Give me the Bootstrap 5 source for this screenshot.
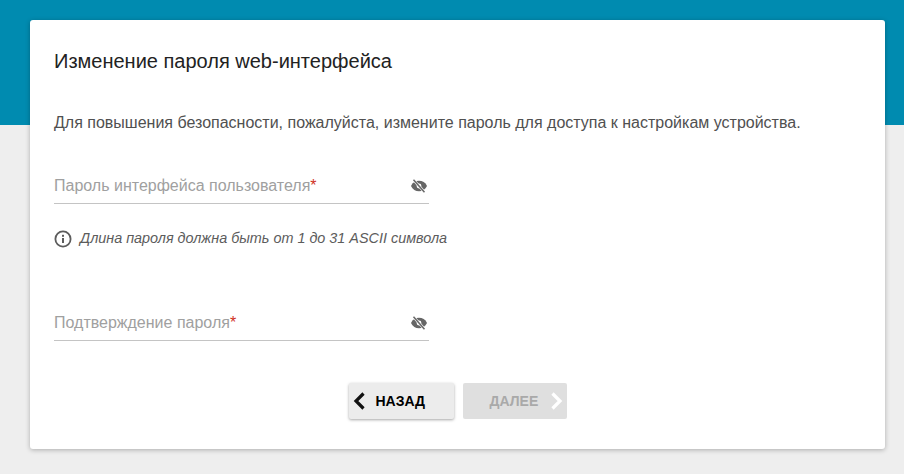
<!DOCTYPE html>
<html lang="ru">

<head>
    <meta charset="UTF-8">
    <meta name="viewport" content="width=device-width, initial-scale=1.0">
    <title>Изменение пароля web-интерфейса</title>
    <link href="https://cdn.jsdelivr.net/npm/bootstrap@5.3.0/dist/css/bootstrap.min.css" rel="stylesheet">
    <style>
        body {
            font-family: "Liberation Sans", Arial, sans-serif;
            background: linear-gradient(#008bb0 125px, #eeeeee 125px);
            min-height: 474px;
            overflow: hidden;
        }
        .wizard-card {
            width: 855px;
            height: 429px;
            margin: 20px 0 0 30px;
            padding: 0 24px;
            border: 0;
            border-radius: 3px;
            box-shadow: 0 1px 5px rgba(0, 0, 0, .28);
        }
        .wizard-title {
            font-size: 20px;
            line-height: 24px;
            font-weight: 400;
            color: #222;
            margin: 29px 0 0;
        }
        .wizard-text {
            font-size: 16px;
            line-height: 20px;
            color: #505050;
            margin: 40px 0 0;
        }
        .pass-field {
            width: 375px;
            height: 38px;
            border-bottom: 1px solid #c4c4c4;
            padding: 2px 2px 0 0;
        }
        .pass-one { margin-top: 33px; }
        .pass-two { margin-top: 54px; }
        .pass-label {
            font-size: 16px;
            color: #a0a0a0;
        }
        .pass-label span { color: #d0321e; }
        .pass-hint {
            margin-top: 25px;
            height: 20px;
            font-size: 14.4px;
            font-style: italic;
            color: #5c5c5c;
        }
        .wizard-actions { margin-top: 42px; gap: 9px; }
        .step-btn {
            height: 36px;
            padding: 0 4px;
            border: 0;
            border-radius: 2px;
            font-size: 14px;
            font-weight: 700;
        }
        .step-back {
            width: 105px;
            background: #ececec;
            color: #000;
            box-shadow: 0 1px 3px rgba(0, 0, 0, .35);
        }
        .step-btn.step-next:disabled {
            width: 104px;
            background: #dfdfdf;
            color: #a9a9a9;
            opacity: 1;
        }
        .step-caption-back { margin-left: 11px; }
        .step-caption-next { margin-left: 23px; }
    </style>
</head>

<body>

    <div class="card wizard-card">
        <h1 class="wizard-title">Изменение пароля web-интерфейса</h1>
        <p class="wizard-text">Для повышения безопасности, пожалуйста, измените пароль для доступа к настройкам устройства.</p>

        <div class="pass-field pass-one d-flex align-items-center justify-content-between">
            <div class="pass-label">Пароль интерфейса пользователя<span>*</span></div>
            <svg width="16" height="14" viewBox="0 0 16 14" fill="none">
                <path d="M0 7C1.600 3.400 4.600 1.800 8 1.800S14.400 3.400 16 7C14.400 10.600 11.400 12.200 8 12.200S1.600 10.600 0 7Z" fill="#666"/>
                <circle cx="8" cy="7" r="2.400" fill="#fff"/>
                <path d="M2.500 .8 13.500 13.200" stroke="#fff" stroke-width="2.600"/>
                <path d="M2.500 .8 13.500 13.200" stroke="#666" stroke-width="1.500"/>
            </svg>
        </div>

        <div class="pass-hint d-flex align-items-center gap-1">
            <svg class="me-1" width="18" height="18" viewBox="0 0 18 18" fill="none">
                <circle cx="9" cy="9" r="7.600" stroke="#5c5c5c" stroke-width="1.800"/>
                <rect x="8" y="8" width="2" height="5" fill="#5c5c5c"/>
                <rect x="8" y="4.800" width="2" height="2" fill="#5c5c5c"/>
            </svg>
            <span>Длина пароля должна быть от 1 до 31 ASCII символа</span>
        </div>

        <div class="pass-field pass-two d-flex align-items-center justify-content-between">
            <div class="pass-label">Подтверждение пароля<span>*</span></div>
            <svg width="16" height="14" viewBox="0 0 16 14" fill="none">
                <path d="M0 7C1.600 3.400 4.600 1.800 8 1.800S14.400 3.400 16 7C14.400 10.600 11.400 12.200 8 12.200S1.600 10.600 0 7Z" fill="#666"/>
                <circle cx="8" cy="7" r="2.400" fill="#fff"/>
                <path d="M2.500 .8 13.500 13.200" stroke="#fff" stroke-width="2.600"/>
                <path d="M2.500 .8 13.500 13.200" stroke="#666" stroke-width="1.500"/>
            </svg>
        </div>

        <div class="wizard-actions d-flex justify-content-center">
            <button class="btn step-btn step-back d-flex align-items-center" type="button">
                <svg width="12" height="18" viewBox="0 0 12 18" fill="none">
                    <path d="M10.500 1.500 3 9l7.500 7.500" stroke="#111" stroke-width="3.200"/>
                </svg>
                <span class="step-caption-back">НАЗАД</span>
            </button>
            <button class="btn step-btn step-next d-flex align-items-center justify-content-between" type="button" disabled>
                <span class="step-caption-next">ДАЛЕЕ</span>
                <svg width="12" height="18" viewBox="0 0 12 18" fill="none">
                    <path d="M1.500 1.500 9 9l-7.500 7.500" stroke="#fff" stroke-width="3.200"/>
                </svg>
            </button>
        </div>
    </div>

<script src="https://cdn.jsdelivr.net/npm/bootstrap@5.3.0/dist/js/bootstrap.bundle.min.js"></script>
</body>
</html>
